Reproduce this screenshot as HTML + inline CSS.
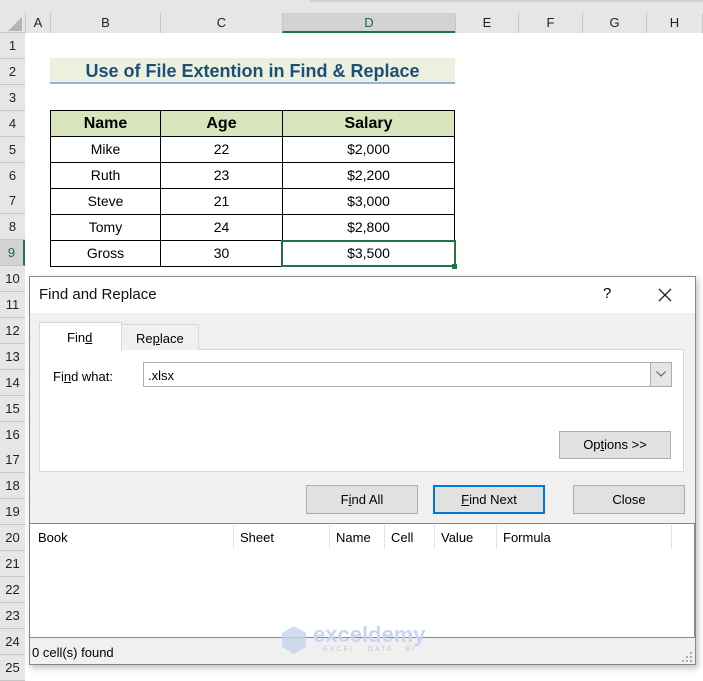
<!DOCTYPE html>
<html><head><meta charset="utf-8"><style>
*{box-sizing:border-box;margin:0;padding:0}
body{width:703px;height:672px;overflow:hidden;background:#fff;font-family:"Liberation Sans",Calibri,sans-serif;position:relative}
.a{position:absolute}
.hdr{background:#e6e6e6;color:#222;font-size:13px;text-align:center}
.t{font-family:"Liberation Sans",sans-serif;font-size:13px;color:#000}
.cell{position:absolute;border:1px solid #000;text-align:center;font-size:14px;line-height:25px}
.btn{position:absolute;background:#e1e1e1;border:1px solid #adadad;font-size:13px;text-align:center}
</style></head><body>
<div class="a" style="left:0;top:0;width:703px;height:13px;background:#e6e6e6"></div>
<div class="a" style="left:310px;top:0;width:393px;height:2px;background:#d0d0d0"></div>
<div class="a hdr" style="left:0;top:13px;width:703px;height:20px;border-bottom:1px solid #c6c6c6"></div>
<div class="a" style="left:0;top:33px;width:25px;height:639px;background:#e6e6e6;border-right:1px solid #c6c6c6"></div>
<svg class="a" style="left:8px;top:17px" width="14" height="14"><polygon points="14,0 14,14 0,14" fill="#b5b5b5"/></svg>
<div class="a hdr" style="left:25px;top:13px;width:25px;height:20px;line-height:19px;border-left:1px solid #c6c6c6">A</div>
<div class="a hdr" style="left:50px;top:13px;width:110px;height:20px;line-height:19px;border-left:1px solid #c6c6c6">B</div>
<div class="a hdr" style="left:160px;top:13px;width:122px;height:20px;line-height:19px;border-left:1px solid #c6c6c6">C</div>
<div class="a hdr" style="left:282px;top:13px;width:173px;height:20px;line-height:19px;border-left:1px solid #c6c6c6;background:#d2d2d2;color:#1e6b3a;border-bottom:2px solid #217346">D</div>
<div class="a hdr" style="left:455px;top:13px;width:63px;height:20px;line-height:19px;border-left:1px solid #c6c6c6">E</div>
<div class="a hdr" style="left:518px;top:13px;width:64px;height:20px;line-height:19px;border-left:1px solid #c6c6c6">F</div>
<div class="a hdr" style="left:582px;top:13px;width:64px;height:20px;line-height:19px;border-left:1px solid #c6c6c6">G</div>
<div class="a hdr" style="left:646px;top:13px;width:57px;height:20px;line-height:19px;border-left:1px solid #c6c6c6;border-right:1px solid #c6c6c6">H</div>
<div id="rows"></div>
<script>
var h='';for(var n=1;n<=25;n++){var t=33+Math.round((n-1)*25.9);h+='<div class="a hdr" style="left:0;top:'+t+'px;width:25px;height:26px;line-height:26px;border-bottom:1px solid #c6c6c6;'+(n==9?'background:#d2d2d2;color:#1e6b3a;border-right:2px solid #217346':'')+'">'+n+'</div>';}
document.getElementById('rows').innerHTML=h;
</script>
<div class="a" style="left:50px;top:58px;width:405px;height:26px;background:#ebf1de;border-bottom:2px solid #95b3d7;text-align:center;font-weight:bold;color:#1f4e79;font-size:18px;line-height:26px">Use of File Extention in Find &amp; Replace</div>
<div class="cell" style="left:50px;top:110px;width:111px;height:27px;background:#d8e4bc;font-weight:bold;font-size:16px">Name</div>
<div class="cell" style="left:160px;top:110px;width:123px;height:27px;background:#d8e4bc;font-weight:bold;font-size:16px">Age</div>
<div class="cell" style="left:282px;top:110px;width:173px;height:27px;background:#d8e4bc;font-weight:bold;font-size:16px">Salary</div>
<div id="tb"></div>
<script>
var d=[["Mike",22,"$2,000"],["Ruth",23,"$2,200"],["Steve",21,"$3,000"],["Tomy",24,"$2,800"],["Gross",30,"$3,500"]],s='';
d.forEach(function(r,i){var t=136+i*26;s+='<div class="cell" style="left:50px;top:'+t+'px;width:111px;height:27px">'+r[0]+'</div><div class="cell" style="left:160px;top:'+t+'px;width:123px;height:27px">'+r[1]+'</div><div class="cell" style="left:282px;top:'+t+'px;width:173px;height:27px">'+r[2]+'</div>';});
document.getElementById('tb').innerHTML=s;
</script>
<div class="a" style="left:281px;top:240px;width:175px;height:27px;border:2px solid #217346"></div>
<div class="a" style="left:452px;top:264px;width:5px;height:5px;background:#217346"></div>

<!-- dialog -->
<div class="a" style="left:29px;top:276px;width:667px;height:389px;background:#f0f0f0;border:1px solid #888;box-shadow:2px 3px 6px rgba(0,0,0,.25)"></div>
<div class="a" style="left:30px;top:277px;width:665px;height:36px;background:#fff"></div>
<div class="a t" style="left:39px;top:286px;font-size:15px;color:#111">Find and Replace</div>
<div class="a t" style="left:603px;top:285px;font-size:15px">?</div>
<svg class="a" style="left:658px;top:288px" width="14" height="14"><path d="M1 1L13 13M13 1L1 13" stroke="#222" stroke-width="1.3"/></svg>
<div class="a" style="left:39px;top:349px;width:645px;height:123px;background:#fff;border:1px solid #d9d9d9"></div>
<div class="a" style="left:121px;top:324px;width:78px;height:26px;background:#f0f0f0;border:1px solid #d9d9d9;border-bottom:none"></div>
<div class="a t" style="left:136px;top:331px">Re<u>p</u>lace</div>
<div class="a" style="left:39px;top:322px;width:83px;height:29px;background:#fff;border:1px solid #d9d9d9;border-bottom:none"></div>
<div class="a t" style="left:67px;top:330px">Fin<u>d</u></div>
<div class="a t" style="left:53px;top:369px">Fi<u>n</u>d what:</div>
<div class="a" style="left:143px;top:362px;width:529px;height:25px;background:#fff;border:1px solid #adadad"></div>
<div class="a t" style="left:148px;top:368px">.xlsx</div>
<div class="a" style="left:650px;top:363px;width:21px;height:23px;background:#e5e5e5;border-left:1px solid #adadad"></div>
<svg class="a" style="left:656px;top:371px" width="10" height="6"><path d="M0.5 0.5L5 5L9.5 0.5" stroke="#555" fill="none"/></svg>
<div class="btn" style="left:559px;top:431px;width:112px;height:28px;line-height:26px">Op<u>t</u>ions &gt;&gt;</div>
<div class="btn" style="left:306px;top:485px;width:112px;height:29px;line-height:27px">F<u>i</u>nd All</div>
<div class="btn" style="left:433px;top:485px;width:112px;height:29px;line-height:25px;border:2px solid #0078d7"><u>F</u>ind Next</div>
<div class="btn" style="left:573px;top:485px;width:112px;height:29px;line-height:27px">Close</div>
<div class="a" style="left:30px;top:523px;width:665px;height:115px;background:#fff;border:1px solid #888;border-left:none"></div>
<div class="a t" style="left:38px;top:530px">Book</div>
<div class="a t" style="left:240px;top:530px">Sheet</div>
<div class="a t" style="left:336px;top:530px">Name</div>
<div class="a t" style="left:391px;top:530px">Cell</div>
<div class="a t" style="left:441px;top:530px">Value</div>
<div class="a t" style="left:503px;top:530px">Formula</div>
<div class="a" style="left:233px;top:525px;width:1px;height:24px;background:#e5e5e5"></div>
<div class="a" style="left:329px;top:525px;width:1px;height:24px;background:#e5e5e5"></div>
<div class="a" style="left:384px;top:525px;width:1px;height:24px;background:#e5e5e5"></div>
<div class="a" style="left:434px;top:525px;width:1px;height:24px;background:#e5e5e5"></div>
<div class="a" style="left:496px;top:525px;width:1px;height:24px;background:#e5e5e5"></div>
<div class="a" style="left:671px;top:525px;width:1px;height:24px;background:#e5e5e5"></div>
<div class="a t" style="left:32px;top:645px">0 cell(s) found</div>
<svg class="a" style="left:281px;top:625px" width="26" height="30"><polygon points="13,1 25,8 25,22 13,29 1,22 1,8" fill="#c5d3ee" opacity=".8"/></svg>
<div class="a" style="left:313px;top:622px;font-size:22px;font-weight:bold;color:#c9d5ef">exceldemy</div>
<div class="a" style="left:323px;top:646px;font-size:7px;letter-spacing:2px;color:#c8c8c8">EXCEL · DATA · BI</div>
<svg class="a" style="left:682px;top:652px" width="11" height="11" fill="#aaa"><rect x="8" y="0" width="2" height="2"/><rect x="4" y="4" width="2" height="2"/><rect x="8" y="4" width="2" height="2"/><rect x="0" y="8" width="2" height="2"/><rect x="4" y="8" width="2" height="2"/><rect x="8" y="8" width="2" height="2"/></svg>
</body></html>
